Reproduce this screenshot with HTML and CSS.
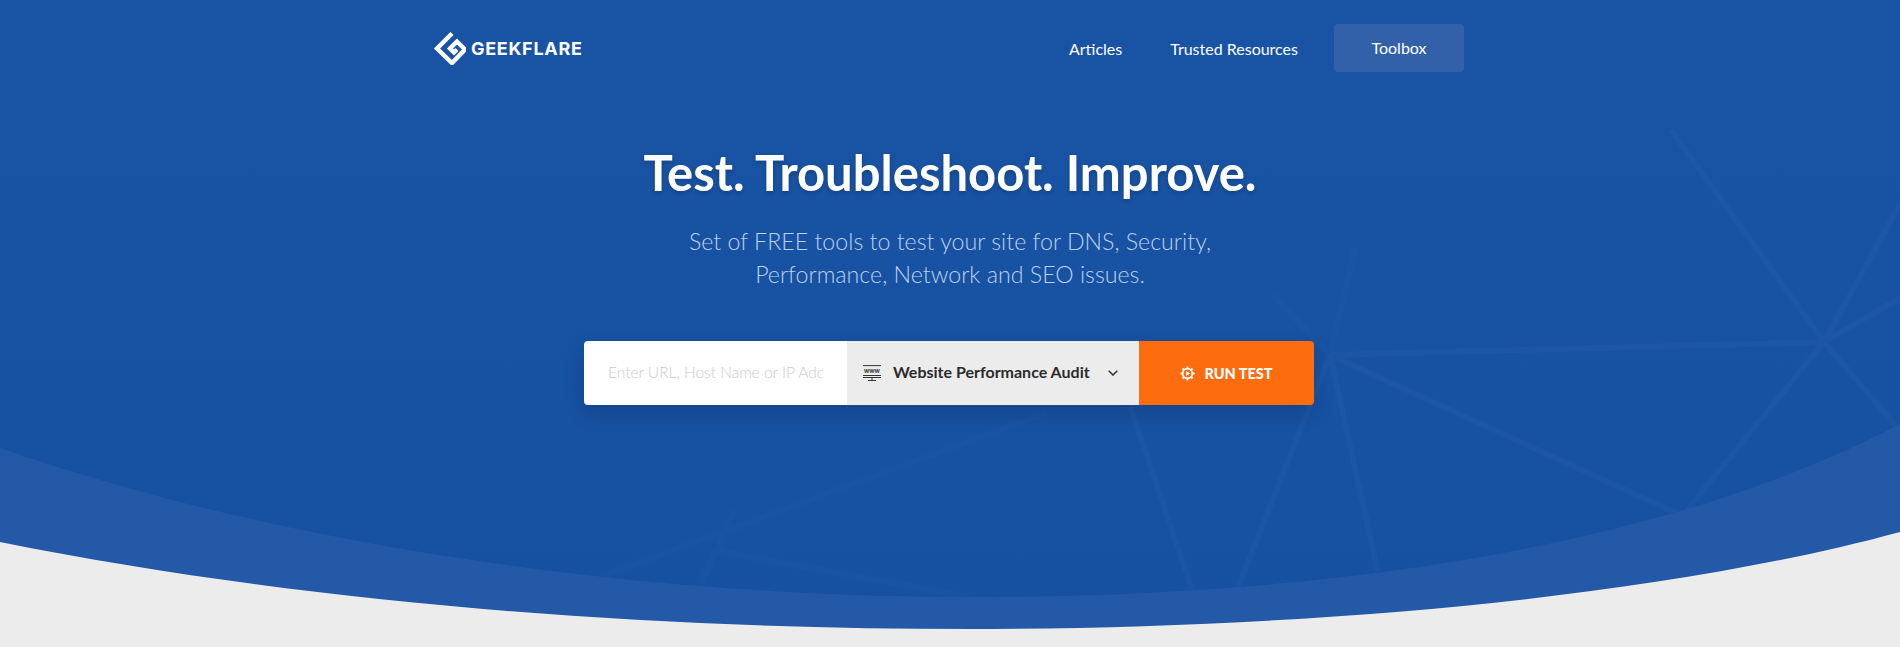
FILE: index.html
```html
<!DOCTYPE html>
<html>
<head>
	<meta charset="UTF-8">
	<meta name="viewport" content="width=device-width, initial-scale=1.0">
	<title>Geekflare Tools</title>
	<link rel="stylesheet" href="styles.css">
</head>
<body>
	<div class="hero">
		<!-- background lines and the two curves at the bottom -->
		<svg class="hero-bg" viewBox="0 0 1900 647" preserveAspectRatio="none">
			<path class="bg-lines" d="M1671 130L1824 342L1687 510M1900 204L1824 342L1896 426M1900 298L1824 342L1330 355L1676 513M1130 406L1192 589M1330 355L1378 572M1330 355L1238 587"/>
			<path class="bg-lines-faint" d="M1355 248L1330 355L1273 295M1046 413L600 577M734 510L700 587M712 550L970 597"/>
			<path class="curve-band" d="M0 448C300 552 660 597 970 597C1300 597 1650 555 1900 424V647H0Z"/>
			<path class="curve-ground" d="M0 542C310 604 650 629 970 629C1290 629 1650 600 1900 532V647H0Z"/>
		</svg>

		<div class="top-nav">
			<a class="logo" href="#">
				<svg class="logo-icon" viewBox="0 0 34 34">
					<path d="M20 2.5L5 17.5L20 32L33 18.5L25 10.5L18 17.5L22 21.5L25 18.5"/>
				</svg>
				<span>GEEKFLARE</span>
			</a>
			<div class="nav-links">
				<a href="#">Articles</a>
				<a href="#">Trusted Resources</a>
				<a class="nav-box" href="#">Toolbox</a>
			</div>
		</div>

		<div class="hero-text">
			<h1>Test. Troubleshoot. Improve.</h1>
			<p>Set of FREE tools to test your site for DNS, Security,<br>Performance, Network and SEO issues.</p>
		</div>

		<div class="test-form">
			<input type="text" class="url-input" placeholder="Enter URL, Host Name or IP Address">
			<div class="test-select">
				<svg class="www-icon" viewBox="0 0 18 16">
					<path d="M0 .6H18M0 10.5H18M0 12.5H18M9 12.5V15M5 15.5H13"/>
					<text x="9" y="7.5" text-anchor="middle">www</text>
				</svg>
				<span>Website Performance Audit</span>
				<svg class="chevron" viewBox="0 0 10 6"><path d="M.7 .7L5 5L9.3 .7"/></svg>
			</div>
			<button type="button" class="run-button">
				<svg class="gear" viewBox="0 0 16 16">
					<circle cx="8" cy="8" r="5.2"/>
					<path class="teeth" d="M8 .5V3M8 13V15.5M.5 8H3M13 8H15.5M2.7 2.7L4.5 4.5M11.5 11.5L13.3 13.3M2.7 13.3L4.5 11.5M11.5 4.5L13.3 2.7"/>
					<path class="play" d="M6.5 5.4L10.8 8L6.5 10.6Z"/>
				</svg>
				RUN TEST
			</button>
		</div>
	</div>
</body>
</html>
```

FILE: styles.css
```css
html, body {
	margin: 0;
	padding: 0;
}
body {
	background: #ececec;
	font-family: "Lato", "Liberation Sans", sans-serif;
	overflow: hidden;
}
a {
	text-decoration: none;
	color: white;
}
.hero {
	position: relative;
	height: 647px;
	background: linear-gradient(#1953a3, #1650a1);
	overflow: hidden;
}
.hero-bg {
	position: absolute;
	left: 0;
	top: 0;
	width: 100%;
	height: 100%;
}
.bg-lines {
	fill: none;
	stroke: #ffffff;
	stroke-opacity: 0.025;
	stroke-width: 6;
}
.bg-lines-faint {
	fill: none;
	stroke: #ffffff;
	stroke-opacity: 0.012;
	stroke-width: 7;
}
.curve-band {
	fill: #2359a6;
}
.curve-ground {
	fill: #ececec;
}
.top-nav {
	position: relative;
	box-sizing: border-box;
	width: 1032px;
	margin-left: 432px;
	padding-top: 24px;
	display: flex;
	justify-content: space-between;
	align-items: center;
}
.logo {
	display: flex;
	align-items: center;
	gap: 5px;
	font-family: "Inter", "Liberation Sans", sans-serif;
	font-size: 18px;
	font-weight: 700;
	letter-spacing: 0.7px;
}
.logo-icon {
	width: 34px;
	height: 34px;
	fill: none;
	stroke: white;
	stroke-width: 4.4;
}
.nav-links {
	display: flex;
	align-items: center;
	gap: 48px;
	font-size: 16px;
}
.nav-box {
	width: 130px;
	height: 48px;
	line-height: 47px;
	margin-left: -12px;
	text-align: center;
	background: #3261aa;
	border-radius: 4px;
}
.hero-text {
	position: relative;
	text-align: center;
	color: white;
	margin-top: 70px;
}
.hero-text h1 {
	margin: 0;
	font-size: 49px;
	line-height: 60px;
	font-weight: 700;
	text-shadow: 0 2px 4px rgba(0, 0, 0, 0.2);
}
.hero-text p {
	margin: 23px 0 0;
	font-size: 23.2px;
	line-height: 33px;
	font-weight: 300;
	color: #bcd0ec;
}
.test-form {
	position: relative;
	display: flex;
	width: 730px;
	height: 64px;
	margin: 50px 0 0 584px;
	border-radius: 4px;
	box-shadow: 0 8px 20px rgba(0, 0, 0, 0.15);
}
.url-input {
	box-sizing: border-box;
	width: 263px;
	height: 64px;
	padding: 0 24px 2px;
	border: none;
	outline: none;
	border-radius: 4px 0 0 4px;
	font-family: inherit;
	font-size: 15.5px;
	font-weight: 300;
}
.url-input::placeholder {
	color: #cbcbcb;
}
.test-select {
	box-sizing: border-box;
	width: 292px;
	display: flex;
	align-items: center;
	padding: 0 21px 0 16px;
	background: #ececec;
	font-size: 16px;
	font-weight: 700;
	color: #2b2b2b;
}
.test-select span {
	margin-left: 12px;
	padding-bottom: 3px;
	flex: 1;
}
.www-icon {
	width: 18px;
	height: 16px;
	fill: none;
	stroke: #333;
	stroke-width: 1;
}
.www-icon text {
	font-size: 6.5px;
	font-weight: 900;
	fill: #333;
	stroke: none;
}
.chevron {
	width: 10px;
	height: 6px;
	fill: none;
	stroke: #333;
	stroke-width: 1.5;
}
.run-button {
	width: 175px;
	border: none;
	border-radius: 0 4px 4px 0;
	background: #fd6c0f;
	color: white;
	font-family: inherit;
	font-size: 14.5px;
	font-weight: 900;
	display: flex;
	align-items: center;
	justify-content: center;
	gap: 9px;
}
.gear {
	width: 15px;
	height: 15px;
	fill: none;
	stroke: white;
	stroke-width: 2;
}
.gear .play {
	fill: white;
	stroke: none;
}
```
